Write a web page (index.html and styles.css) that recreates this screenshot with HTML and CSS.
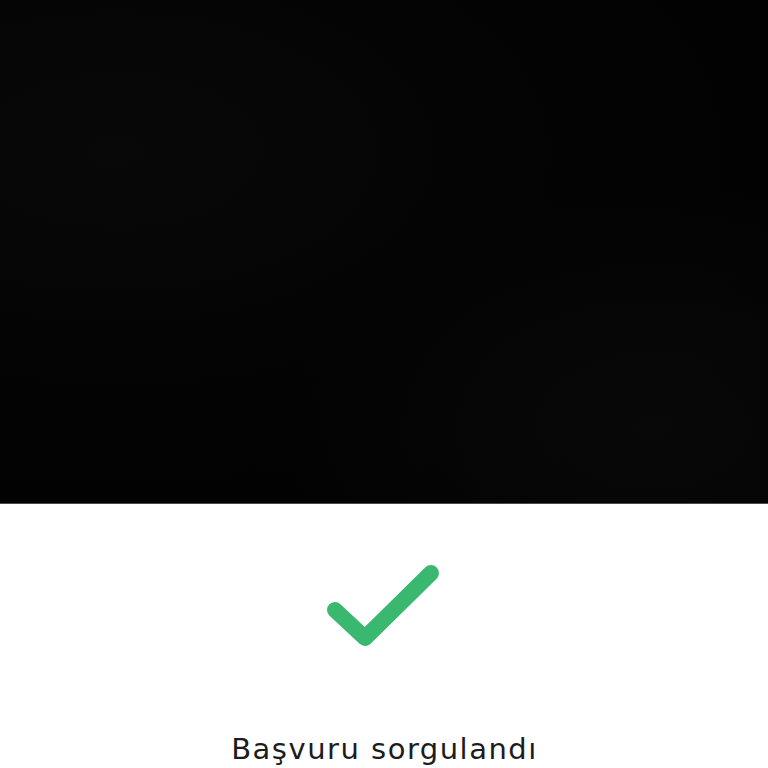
FILE: index.html
```html
<!DOCTYPE html>
<html lang="tr">
<head>
<meta charset="utf-8">
<title>Başvuru sorgulandı</title>
<link rel="stylesheet" href="styles.css">
</head>
<body>
<div class="screen">
  <div class="camera"></div>
  <div class="result">
    <svg class="check" width="120" height="90" viewBox="0 0 120 90" aria-hidden="true">
      <polyline points="11,52 41,80 107,15" fill="none" stroke="#3bb870" stroke-width="16" stroke-linecap="round" stroke-linejoin="round"/>
    </svg>
    <div class="title">Başvuru sorgulandı</div>
  </div>
</div>
</body>
</html>
```

FILE: styles.css
```css
html, body {
  margin: 0;
  padding: 0;
  background: #ffffff;
}
.screen {
  width: 768px;
  height: 768px;
  overflow: hidden;
  display: flex;
  flex-direction: column;
}
.camera {
  height: 503px;
  flex: none;
  background:
    radial-gradient(ellipse at 85% 85%, #080808 0%, rgba(3,3,3,0) 40%),
    radial-gradient(ellipse at 15% 30%, #080808 0%, #030303 50%, #020202 100%);
  border-bottom: 1px solid #4a4a4a;
}
.result {
  display: flex;
  flex-direction: column;
  align-items: center;
  padding-top: 54px;
}
.check {
  display: block;
}
.title {
  margin-top: 83px;
  padding-left: 1px;
  font-family: "DejaVu Sans", "Noto Sans", sans-serif;
  font-size: 29px;
  line-height: 36px;
  letter-spacing: 1.5px;
  color: #1c1c1c;
  white-space: nowrap;
}
```
